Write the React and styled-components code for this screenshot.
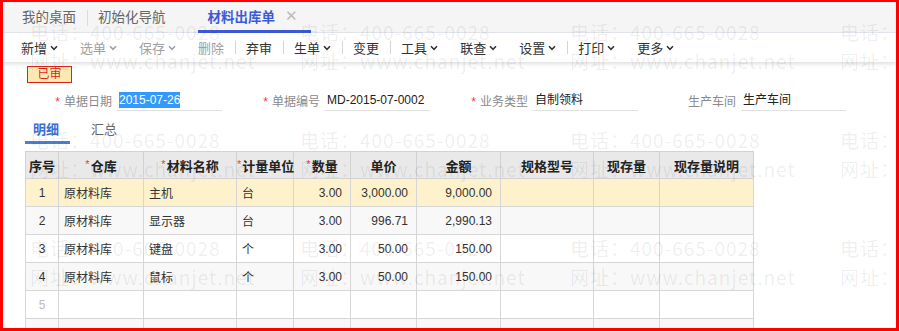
import React from "react";
import styled, { createGlobalStyle } from "styled-components";

const GlobalStyle = createGlobalStyle`
  html, body {
    margin: 0;
    padding: 0;
    background: #fff;
  }
  body {
    font-family: "Liberation Sans", "Noto Sans CJK SC", sans-serif;
    color: #333;
  }
`;

const Frame = styled.div`
  position: relative;
  width: 899px;
  height: 331px;
  box-sizing: border-box;
  border-style: solid;
  border-color: #f00;
  border-width: 2px 3px 3px 3px;
  overflow: hidden;
  background: #fff;
`;

const TabBar = styled.div`
  display: flex;
  height: 31px;
  padding-left: 8px;
  background: #f5f5f5;
  border-bottom: 1px solid #e4e6ee;
  box-sizing: border-box;
`;

const Tab = styled.div`
  position: relative;
  display: flex;
  align-items: center;
  gap: 10px;
  padding: ${(p) => (p.$active ? "0 13px 0 10px" : "0 11px")};
  margin-left: ${(p) => (p.$active ? "21px" : "0")};
  font-size: 13.5px;
  font-weight: ${(p) => (p.$active ? "bold" : "normal")};
  color: ${(p) => (p.$active ? "#3d5bd6" : "#666")};
  border-bottom: 3px solid ${(p) => (p.$active ? "#3d5bd6" : "transparent")};
  margin-bottom: -1px;
  & + &::before {
    content: "";
    position: absolute;
    left: 0;
    top: 8px;
    width: 1px;
    height: 16px;
    background: ${(p) => (p.$active ? "transparent" : "#dcdcdc")};
  }
`;

const Close = styled.span`
  font-size: 15px;
  font-weight: normal;
  color: #bbb;
`;

const Toolbar = styled.div`
  position: relative;
  display: flex;
  align-items: center;
  height: 29px;
  padding-left: 7px;
  background: #fff;
  box-shadow: 0 2px 4px rgba(0, 0, 0, 0.13);
`;

const ToolItem = styled.div`
  display: flex;
  align-items: center;
  gap: 3px;
  padding: 0 11px;
  font-size: 13px;
  color: ${(p) => (p.$disabled ? "#a0a0a0" : "#333")};
`;

const Sep = styled.div`
  width: 1px;
  height: 13px;
  margin-right: -1px;
  background: #d6d6d6;
`;

const Chevron = ({ color }) => (
  <svg width="8" height="6" viewBox="0 0 8 6">
    <path d="M1 1.3 L4 4.3 L7 1.3" fill="none" stroke={color} strokeWidth="1.6" />
  </svg>
);

const Badge = styled.div`
  width: 45px;
  height: 17px;
  margin: 4px 0 0 24px;
  box-sizing: border-box;
  border: 1px solid #d9261c;
  background: #fce9b2;
  color: #d9261c;
  font-size: 12px;
  line-height: 15px;
  text-align: center;
`;

const FormRow = styled.div`
  display: flex;
  margin-top: 7px;
  padding-left: 49px;
`;

const Field = styled.div`
  display: flex;
  align-items: center;
  width: 208px;
  height: 21px;
`;

const Label = styled.div`
  width: 60px;
  text-align: right;
  font-size: 12px;
  color: #8a8a8a;
  white-space: nowrap;
`;

const Star = styled.span`
  color: #e5433a;
  margin-right: 4px;
`;

const Input = styled.div`
  width: 105px;
  height: 21px;
  margin-left: 5px;
  box-sizing: border-box;
  border-bottom: 1px solid #e0e0e0;
  padding-left: 2px;
  font-size: 12px;
  line-height: 20px;
  color: #222;
  white-space: nowrap;
`;

const Selected = styled.span`
  background: #3399ff;
  color: #fff;
  padding: 1px 0;
`;

const SubTabs = styled.div`
  display: flex;
  height: 28px;
  margin: 5px 0 0 22px;
`;

const SubTab = styled.div`
  display: flex;
  align-items: center;
  padding: 0 11px 0 8px;
  margin-right: 13px;
  font-size: 13px;
  font-weight: ${(p) => (p.$active ? "bold" : "normal")};
  color: ${(p) => (p.$active ? "#3a6fd0" : "#666")};
  border-bottom: 3px solid ${(p) => (p.$active ? "#4a7fd6" : "transparent")};
`;

const Table = styled.table`
  margin: 7px 0 0 22px;
  border-collapse: collapse;
  table-layout: fixed;
  width: 728px;
`;

const Th = styled.th`
  height: 26px;
  padding: 0;
  border: 1px solid #d2d2d2;
  background: #e9e9e9;
  font-size: 13px;
  font-weight: bold;
  color: #222;
  text-align: center;
  white-space: nowrap;
`;

const Tr = styled.tr`
  background: ${(p) => (p.$current ? "#fdf2cb" : p.$odd ? "#f8f8f8" : "#fff")};
`;

const Td = styled.td`
  height: 27px;
  padding: ${(p) => (p.$align === "right" ? "0 8px 0 0" : p.$align === "center" ? "0" : "0 0 0 5px")};
  border: 1px solid #d6d6d6;
  font-size: 12px;
  color: ${(p) => (p.$muted ? "#bbb" : "#333")};
  text-align: ${(p) => p.$align || "left"};
  white-space: nowrap;
  overflow: hidden;
`;

const Watermark = styled.div`
  position: absolute;
  inset: 0;
  pointer-events: none;
  display: grid;
  grid-template-columns: repeat(4, 270px);
  grid-auto-rows: 108px;
  padding: 15px 0 0 27px;
  font-family: "Noto Sans CJK SC", sans-serif;
  font-size: 19px;
  letter-spacing: 1px;
  line-height: 29px;
  color: rgba(0, 0, 0, 0.075);
  white-space: nowrap;
`;

const tools = [
  { label: "新增", menu: true },
  { label: "选单", menu: true, disabled: true },
  { label: "保存", menu: true, disabled: true },
  { label: "删除", disabled: true, sep: true },
  { label: "弃审", sep: true },
  { label: "生单", menu: true, sep: true },
  { label: "变更", sep: true },
  { label: "工具", menu: true },
  { label: "联查", menu: true },
  { label: "设置", menu: true, sep: true },
  { label: "打印", menu: true },
  { label: "更多", menu: true },
];

const columns = [
  { title: "序号", width: 33 },
  { title: "仓库", width: 85, req: true },
  { title: "材料名称", width: 93, req: true },
  { title: "计量单位", width: 57, req: true },
  { title: "数量", width: 57, req: true },
  { title: "单价", width: 66 },
  { title: "金额", width: 84 },
  { title: "规格型号", width: 93 },
  { title: "现存量", width: 66 },
  { title: "现存量说明", width: 94 },
];

const rows = [
  ["原材料库", "主机", "台", "3.00", "3,000.00", "9,000.00"],
  ["原材料库", "显示器", "台", "3.00", "996.71", "2,990.13"],
  ["原材料库", "键盘", "个", "3.00", "50.00", "150.00"],
  ["原材料库", "鼠标", "个", "3.00", "50.00", "150.00"],
  [],
  [],
];

const ReqStar = styled.span`
  color: #e5433a;
  font-size: 11px;
  font-weight: normal;
  vertical-align: 3px;
  margin-right: 1px;
`;

export default function App() {
  return (
    <>
      <GlobalStyle />
      <Frame>
        <TabBar>
          <Tab>我的桌面</Tab>
          <Tab>初始化导航</Tab>
          <Tab $active>
            材料出库单<Close>✕</Close>
          </Tab>
        </TabBar>
        <Toolbar>
          {tools.map((t) => (
            <React.Fragment key={t.label}>
              <ToolItem $disabled={t.disabled}>
                {t.label}
                {t.menu && <Chevron color={t.disabled ? "#a0a0a0" : "#333"} />}
              </ToolItem>
              {t.sep && <Sep />}
            </React.Fragment>
          ))}
        </Toolbar>
        <Badge>已审</Badge>
        <FormRow>
          <Field>
            <Label><Star>*</Star>单据日期</Label>
            <Input><Selected>2015-07-26</Selected></Input>
          </Field>
          <Field>
            <Label><Star>*</Star>单据编号</Label>
            <Input>MD-2015-07-0002</Input>
          </Field>
          <Field>
            <Label><Star>*</Star>业务类型</Label>
            <Input>自制领料</Input>
          </Field>
          <Field>
            <Label>生产车间</Label>
            <Input>生产车间</Input>
          </Field>
        </FormRow>
        <SubTabs>
          <SubTab $active>明细</SubTab>
          <SubTab>汇总</SubTab>
        </SubTabs>
        <Table>
          <colgroup>
            {columns.map((c) => (
              <col key={c.title} style={{ width: c.width }} />
            ))}
          </colgroup>
          <thead>
            <tr>
              {columns.map((c) => (
                <Th key={c.title}>
                  {c.req && <ReqStar>*</ReqStar>}
                  {c.title}
                </Th>
              ))}
            </tr>
          </thead>
          <tbody>
            {rows.map((r, i) => (
              <Tr key={i} $current={i === 0} $odd={i % 2 === 1}>
                <Td $align="center" $muted={r.length === 0}>{i + 1}</Td>
                <Td>{r[0]}</Td>
                <Td>{r[1]}</Td>
                <Td>{r[2]}</Td>
                <Td $align="right">{r[3]}</Td>
                <Td $align="right">{r[4]}</Td>
                <Td $align="right">{r[5]}</Td>
                <Td />
                <Td />
                <Td />
              </Tr>
            ))}
          </tbody>
        </Table>
        <Watermark>
          {Array.from({ length: 12 }).map((_, i) => (
            <div key={i}>
              <div>电话：400-665-0028</div>
              <div>网址：www.chanjet.net</div>
            </div>
          ))}
        </Watermark>
      </Frame>
    </>
  );
}
